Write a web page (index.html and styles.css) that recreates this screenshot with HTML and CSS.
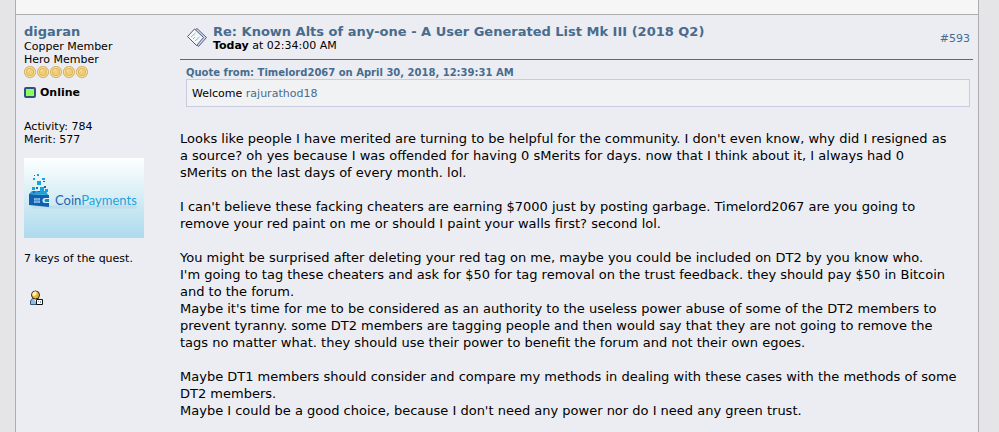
FILE: index.html
```html
<!DOCTYPE html>
<html lang="en">
<head>
<meta charset="utf-8">
<title>Known Alts of any-one - A User Generated List Mk III (2018 Q2)</title>
<link rel="stylesheet" href="styles.css">
</head>
<body>
<svg class="defs" width="0" height="0" aria-hidden="true">
  <defs>
    <radialGradient id="gold"><stop offset="0" stop-color="#f0d080"/><stop offset=".5" stop-color="#eecb74"/><stop offset=".64" stop-color="#dcb45a"/><stop offset=".8" stop-color="#f8e3a0"/><stop offset="1" stop-color="#d9b058"/></radialGradient>
    <symbol id="coin" viewBox="0 0 13 13"><circle cx="6" cy="6" r="5.700" fill="url(#gold)" stroke="#c9a253" stroke-width=".6"/><path d="M3.800 5.700a2.500 2.500 0 0 1 2.400-2.100" stroke="#fbe7ae" fill="none"/></symbol>
  </defs>
</svg>
<main class="board">
  <div class="previous"></div>
  <article class="post">
    <aside class="author">
      <a class="name" href="#">digaran</a>
      <div>Copper Member</div>
      <div>Hero Member</div>
      <div class="coins">
        <svg><use href="#coin"/></svg><svg><use href="#coin"/></svg><svg><use href="#coin"/></svg><svg><use href="#coin"/></svg><svg><use href="#coin"/></svg>
      </div>
      <div class="status"><span class="light"></span><b>Online</b></div>
      <div>Activity: 784</div>
      <div>Merit: 577</div>
      <svg class="avatar" viewBox="0 0 120 80" role="img" aria-label="CoinPayments">
        <defs>
          <linearGradient id="sky" x1="0" y1="0" x2="0" y2="1"><stop offset="0" stop-color="#fdffff"/><stop offset=".3" stop-color="#e5f4f8"/><stop offset="1" stop-color="#addaed"/></linearGradient>
          <filter id="soft"><feGaussianBlur stdDeviation="1.5"/></filter>
        </defs>
        <rect width="120" height="80" fill="url(#sky)"/>
        <path d="M8 48h105v2H8z" fill="#6aa5c4" opacity=".3" filter="url(#soft)"/>
        <path d="M5 36l20 1v12L5 47z" fill="#0c62b0"/>
        <path d="M5 36l3-3h14l2 4z" fill="#249fd6"/>
        <path d="M10 40h6v5h-6z" fill="#8db9df"/>
        <path d="M12 40v5M14 40v5M10 42.500h6" stroke="#3a7fc0" stroke-width=".6"/>
        <path d="M25 40h-4a2.500 2.500 0 0 0 0 5h4z" fill="#dceff8"/>
        <path d="M25 41h-3a1.500 1.500 0 0 0 0 3h3z" fill="#1687cc"/>
        <g fill="#13a3df"><path d="M13 23h4v4h-4zM9 20h2v2H9zM18 20h3v2h-3zM13 16h2v2h-2zM8 29h3v3H8zM16 29h4v4h-4zM21 31h3v3h-3z"/></g>
        <g fill="#1768ac"><path d="M10 17h1v1h-1zM19 23h2v1h-2zM12 29h2v2h-2zM9 33h2v2H9zM20 28h2v2h-2zM14 33h2v1h-2z"/></g>
        <text class="logo" x="31" y="47"><tspan fill="#1767af">Coin</tspan><tspan fill="#20a4dc">Payments</tspan></text>
      </svg>
      <div>7 keys of the quest.</div>
      <a class="profile" href="#" aria-label="View profile">
        <svg viewBox="0 0 16 16">
          <path d="M1.500 14.500V11l2-2.500h6L12 11v3.500z" fill="#92b9df" stroke="#355b83"/>
          <path d="M5 9l1.500 3L8 9z" fill="#fff"/>
          <circle cx="6.500" cy="5" r="4" fill="#f2b82d" stroke="#33291a"/>
          <path d="M3.500 5.500V3l2-1.500h2V4l-2 2z" fill="#fff5cc"/>
          <path d="M7.500 9.500h6v5h-6z" fill="#fff" stroke="#111"/>
          <path d="M9 11h1v1H9zM11 11h1v2h-1z" fill="#78aaa0"/>
        </svg>
      </a>
    </aside>
    <section class="message">
      <header>
        <svg class="topic" viewBox="0 0 22 22">
          <path d="M7 4.500l4-3 9.500 9-8 9-3-3z" fill="#c9d3fa" stroke="#5a6078"/>
          <path d="M1.500 9.500l7-7.500 9 8.500-7 8z" fill="#f3f8fc" stroke="#555c66"/>
          <path d="M5 10l4.500-4M7 12l2-2M9 14l4.500-4" stroke="#9fadb8"/>
        </svg>
        <div class="heading">
          <a class="subject" href="#">Re: Known Alts of any-one - A User Generated List Mk III (2018 Q2)</a>
          <div><b>Today</b> at 02:34:00 AM</div>
        </div>
        <a class="number" href="#">#593</a>
      </header>
      <div class="quote">
        <a class="source" href="#">Quote from: Timelord2067 on April 30, 2018, 12:39:31 AM</a>
        <blockquote>Welcome <a href="#">rajurathod18</a></blockquote>
      </div>
      <div class="text">
        <p>Looks like people I have merited are turning to be helpful for the community. I don't even know, why did I resigned as<br>a source? oh yes because I was offended for having 0 sMerits for days. now that I think about it, I always had 0<br>sMerits on the last days of every month. lol.</p>
        <p>I can't believe these facking cheaters are earning $7000 just by posting garbage. Timelord2067 are you going to<br>remove your red paint on me or should I paint your walls first? second lol.</p>
        <p>You might be surprised after deleting your red tag on me, maybe you could be included on DT2 by you know who.<br>I'm going to tag these cheaters and ask for $50 for tag removal on the trust feedback. they should pay $50 in Bitcoin<br>and to the forum.<br>Maybe it's time for me to be considered as an authority to the useless power abuse of some of the DT2 members to<br>prevent tyranny. some DT2 members are tagging people and then would say that they are not going to remove the<br>tags no matter what. they should use their power to benefit the forum and not their own egoes.</p>
        <p>Maybe DT1 members should consider and compare my methods in dealing with these cases with the methods of some<br>DT2 members.<br>Maybe I could be a good choice, because I don't need any power nor do I need any green trust.</p>
      </div>
    </section>
  </article>
</main>
</body>
</html>
```
FILE: styles.css
```css
* { box-sizing: border-box; }
body {
  margin: 0;
  background: #e5e5e8;
  color: #000;
  font: 11px/13px Verdana, "DejaVu Sans", sans-serif;
}
a { color: #476c8e; text-decoration: none; }
svg { display: block; }
.defs { position: absolute; }
.board {
  display: flex;
  flex-direction: column;
  min-height: 100vh;
  margin: 0 20px 0 15px;
  border: solid #adadad;
  border-width: 0 1px;
}
.previous { height: 14px; background: #f6f6f6; }
.post {
  flex: 1;
  display: flex;
  gap: 16px;
  padding: 9px 5px 13px 8px;
  border-top: 1px solid #adadad;
  background: #ecedf3;
}
.author { flex: 0 0 140px; }
.name, .subject { display: block; font-size: 13px; font-weight: bold; line-height: 15px; }
.name { margin-bottom: 1px; }
.coins { display: flex; }
.coins svg { width: 13px; height: 13px; }
.status { display: flex; align-items: center; gap: 4px; margin: 7px 0 21px; }
.light { width: 12px; height: 11px; border: 2px solid #32527a; border-radius: 2px; background: #8aff62; }
.avatar { width: 120px; height: 80px; margin: 12px 0 14px; }
.logo { font: 13px Lato, sans-serif; }
.profile { display: block; margin: 25px 0 0 5px; }
.profile svg { width: 16px; height: 16px; }
.message { flex: 1; min-width: 0; }
header {
  display: flex;
  align-items: center;
  gap: 5px;
  padding: 0 3px 7px 6px;
  border-bottom: 1px solid #666;
}
.topic { width: 22px; height: 22px; }
.heading { flex: 1; }
.quote { margin: 7px 3px 23px 6px; }
.source { display: block; font-size: 10px; font-weight: bold; line-height: 12px; }
blockquote {
  margin: 0;
  padding: 7px 5px 6px;
  border: 1px solid #cbcbdf;
  background: #f1f2f4;
}
.text { font-size: 13px; line-height: 17px; }
.text p { margin: 0 0 17px; }
.text p:last-child { margin: 0; }
```
